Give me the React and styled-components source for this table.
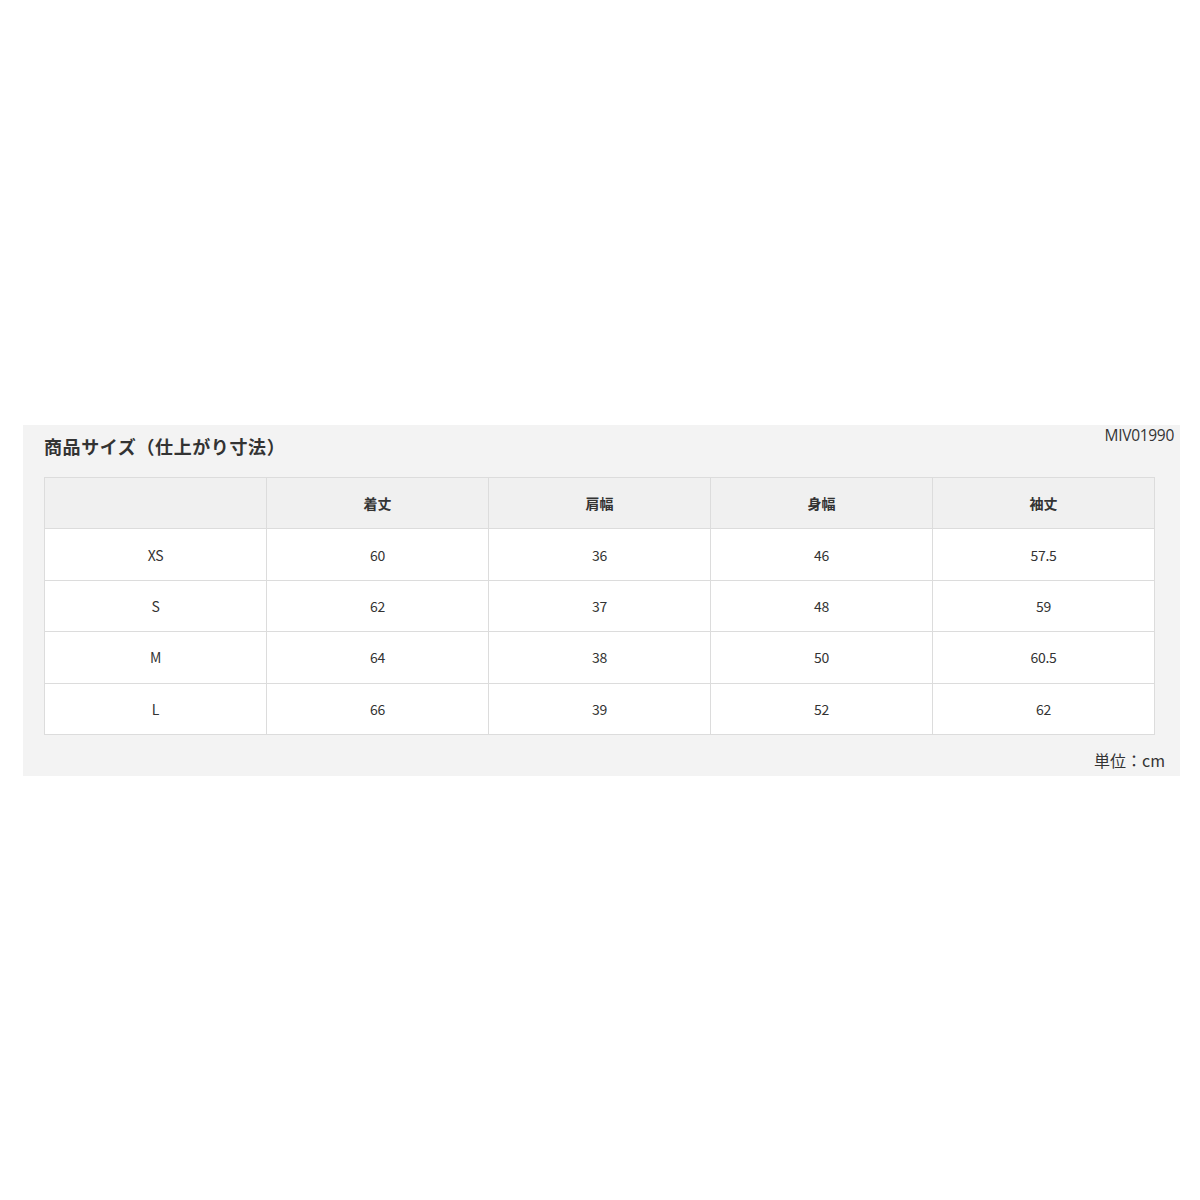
import React from "react";
import styled, { createGlobalStyle } from "styled-components";

const Global = createGlobalStyle`
  html, body {
    margin: 0;
    padding: 0;
    background: #fff;
    font-family: "Noto Sans CJK JP", "Noto Sans", sans-serif;
    color: #333;
  }
`;

const Page = styled.div`
  width: 1200px;
  height: 1200px;
  padding-top: 425px;
  padding-left: 23px;
  box-sizing: border-box;
`;

const Panel = styled.section`
  width: 1157px;
  height: 351px;
  background: #f3f3f3;
  box-sizing: border-box;
  padding: 0 25px 0 21px;
`;

const Head = styled.div`
  height: 52px;
  display: flex;
  align-items: flex-start;
  justify-content: space-between;
`;

const Title = styled.h2`
  margin: 9px 0 0;
  font-size: 18px;
  font-weight: 700;
  line-height: 25px;
  letter-spacing: 0.6px;
  color: #333;
`;

const Code = styled.span`
  margin: 0 -19px 0 0;
  font-family: "Open Sans", "Noto Sans", sans-serif;
  font-size: 15.5px;
  line-height: 21px;
  letter-spacing: -0.3px;
  color: #333;
`;

const Table = styled.table`
  width: 1111px;
  border-collapse: collapse;
  table-layout: fixed;
  background: #fff;
`;

const Th = styled.th`
  height: 50.4px;
  border: 1px solid #dcdcdc;
  background: #f0f0f0;
  font-size: 14px;
  font-weight: 700;
  color: #333;
  padding: 0;
`;

const Td = styled.td`
  height: 50.4px;
  border: 1px solid #dcdcdc;
  text-align: center;
  font-size: 14px;
  color: #333;
  padding: 0;
  letter-spacing: -0.3px;
`;

const Unit = styled.div`
  text-align: right;
  margin: 14px -10px 0 0;
  font-size: 16px;
  line-height: 23px;
  color: #333;
`;

const headers = ["", "着丈", "肩幅", "身幅", "袖丈"];
const rows = [
  ["XS", "60", "36", "46", "57.5"],
  ["S", "62", "37", "48", "59"],
  ["M", "64", "38", "50", "60.5"],
  ["L", "66", "39", "52", "62"],
];

export default function App() {
  return (
    <>
      <Global />
      <Page>
        <Panel>
          <Head>
            <Title>商品サイズ（仕上がり寸法）</Title>
            <Code>MIV01990</Code>
          </Head>
          <Table>
            <thead>
              <tr>
                {headers.map((h, i) => (
                  <Th key={i}>{h}</Th>
                ))}
              </tr>
            </thead>
            <tbody>
              {rows.map((r, i) => (
                <tr key={i}>
                  {r.map((c, j) => (
                    <Td key={j}>{c}</Td>
                  ))}
                </tr>
              ))}
            </tbody>
          </Table>
          <Unit>単位：cm</Unit>
        </Panel>
      </Page>
    </>
  );
}
